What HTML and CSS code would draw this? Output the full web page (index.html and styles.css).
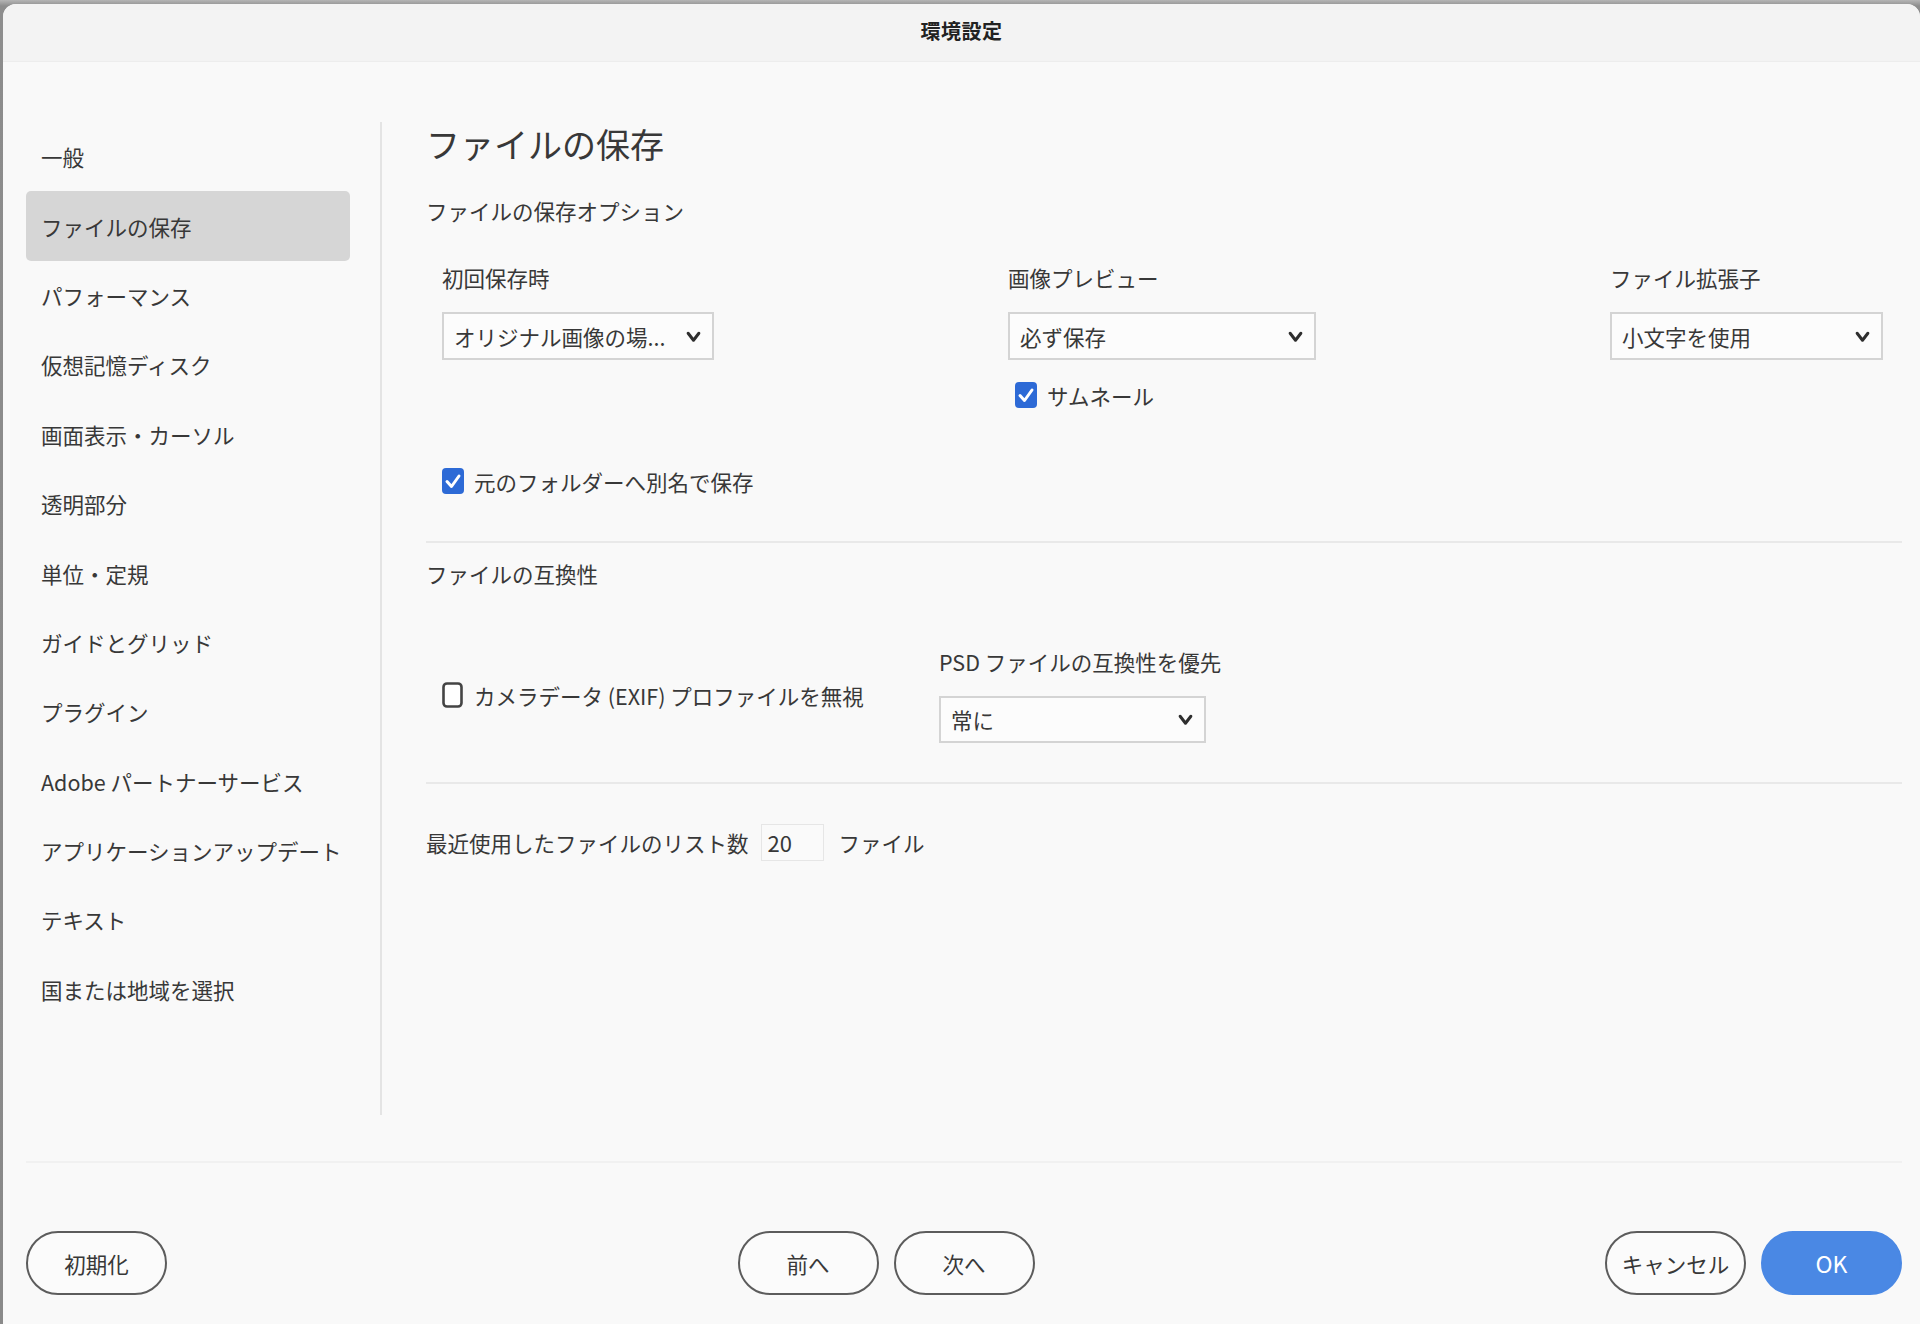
FILE: index.html
```html
<!DOCTYPE html>
<html lang="ja">
<head>
<meta charset="utf-8">
<title>環境設定</title>
<link rel="stylesheet" href="styles.css">
</head>
<body>
<div class="window">
  <header class="titlebar">環境設定</header>
  <div class="main">
    <nav class="sidebar">
      <div class="nav-item">一般</div>
      <div class="nav-item active">ファイルの保存</div>
      <div class="nav-item">パフォーマンス</div>
      <div class="nav-item">仮想記憶ディスク</div>
      <div class="nav-item">画面表示・カーソル</div>
      <div class="nav-item">透明部分</div>
      <div class="nav-item">単位・定規</div>
      <div class="nav-item">ガイドとグリッド</div>
      <div class="nav-item">プラグイン</div>
      <div class="nav-item">Adobe パートナーサービス</div>
      <div class="nav-item">アプリケーションアップデート</div>
      <div class="nav-item">テキスト</div>
      <div class="nav-item">国または地域を選択</div>
    </nav>
    <section class="content">
      <h1 class="page-title">ファイルの保存</h1>
      <h2 class="section-title first">ファイルの保存オプション</h2>
      <div class="options-grid">
        <div class="field col1">
          <div class="field-label">初回保存時</div>
          <div class="select w272"><span>オリジナル画像の場...</span><svg class="chev" viewBox="0 0 14 12"><path d="M2 3 L7 9.5 L12 3"/></svg></div>
        </div>
        <div class="field col2">
          <div class="field-label">画像プレビュー</div>
          <div class="select w308"><span>必ず保存</span><svg class="chev" viewBox="0 0 14 12"><path d="M2 3 L7 9.5 L12 3"/></svg></div>
          <label class="check sub">
            <svg class="box" viewBox="0 0 22 26"><rect x="0" y="0" width="22" height="26" rx="4" fill="#2d6ad6"/><path d="M5 13.5 L9.5 18.5 L17 8" fill="none" stroke="#fff" stroke-width="3" stroke-linecap="round" stroke-linejoin="round"/></svg>
            <span>サムネール</span>
          </label>
        </div>
        <div class="field col3">
          <div class="field-label">ファイル拡張子</div>
          <div class="select w273"><span>小文字を使用</span><svg class="chev" viewBox="0 0 14 12"><path d="M2 3 L7 9.5 L12 3"/></svg></div>
        </div>
      </div>
      <label class="check row-check">
        <svg class="box" viewBox="0 0 22 26"><rect x="0" y="0" width="22" height="26" rx="4" fill="#2d6ad6"/><path d="M5 13.5 L9.5 18.5 L17 8" fill="none" stroke="#fff" stroke-width="3" stroke-linecap="round" stroke-linejoin="round"/></svg>
        <span>元のフォルダーへ別名で保存</span>
      </label>
      <hr class="divider d1">
      <h2 class="section-title">ファイルの互換性</h2>
      <div class="compat-row">
        <label class="check exif">
          <svg class="box" viewBox="0 0 22 26"><rect x="1.5" y="1.5" width="18" height="23" rx="3.5" fill="#fff" stroke="#444" stroke-width="2.6"/></svg>
          <span>カメラデータ (EXIF) プロファイルを無視</span>
        </label>
        <div class="field">
          <div class="field-label">PSD ファイルの互換性を優先</div>
          <div class="select w267 h47"><span>常に</span><svg class="chev" viewBox="0 0 14 12"><path d="M2 3 L7 9.5 L12 3"/></svg></div>
        </div>
      </div>
      <hr class="divider d2">
      <div class="recent-row">
        <span>最近使用したファイルのリスト数</span>
        <span class="num-input">20</span>
        <span class="unit">ファイル</span>
      </div>
    </section>
  </div>
  <footer class="footer">
    <div class="btn-group">
      <button class="btn">初期化</button>
    </div>
    <div class="btn-group">
      <button class="btn">前へ</button>
      <button class="btn">次へ</button>
    </div>
    <div class="btn-group">
      <button class="btn">キャンセル</button>
      <button class="btn primary">OK</button>
    </div>
  </footer>
</div>
</body>
</html>
```
FILE: styles.css
```css
* { box-sizing: border-box; }

html, body {
  margin: 0;
  padding: 0;
}

body {
  width: 1920px;
  height: 1324px;
  overflow: hidden;
  background: linear-gradient(#b5b5b5, #8d8d8d 6px, #8a8a8a);
  font-family: "Noto Sans CJK JP", "Noto Sans", sans-serif;
  color: #383838;
  padding: 4px 0 0 3px;
}

.window {
  width: 1917px;
  height: 1324px;
  background: #f9f9f9;
  border-radius: 13px 13px 0 0;
  overflow: hidden;
  display: flex;
  flex-direction: column;
}

.titlebar {
  height: 58px;
  flex: none;
  background: #f3f3f3;
  border-bottom: 1px solid #ededed;
  text-align: center;
  font-size: 20px;
  font-weight: 700;
  line-height: 54px;
  color: #222;
  letter-spacing: 0.5px;
}

.main {
  flex: none;
  height: 1099px;
  display: flex;
  padding: 60px 0 46px 0;
}

.sidebar {
  width: 379px;
  flex: none;
  padding-left: 23px;
  border-right: 2px solid #e4e4e4;
  display: flex;
  flex-direction: column;
}

.nav-item {
  width: 324px;
  height: 69.4px;
  flex: none;
  display: flex;
  align-items: center;
  padding-left: 15px;
  font-size: 21.5px;
  color: #383838;
  border-radius: 5px;
  white-space: nowrap;
}

.nav-item.active {
  background: #d6d6d6;
}

.content {
  flex: 1;
  padding: 0 18px 0 44px;
}

.page-title {
  margin: 0;
  font-size: 34px;
  font-weight: 400;
  line-height: 44px;
  color: #383838;
}

.section-title {
  margin: 16px 0 0 0;
  font-size: 21.5px;
  font-weight: 400;
  line-height: 30px;
  color: #383838;
}

.section-title.first {
  margin-top: 30px;
}

.options-grid {
  margin-top: 37px;
  padding-left: 16px;
  display: grid;
  grid-template-columns: 566px 602px auto;
  align-items: start;
}

.field {
  display: flex;
  flex-direction: column;
}

.field-label {
  font-size: 21.5px;
  line-height: 30px;
  color: #383838;
  white-space: nowrap;
}

.select {
  margin-top: 19px;
  height: 48px;
  border: 2px solid #d4d4d4;
  background: #fcfcfc;
  display: flex;
  align-items: center;
  justify-content: space-between;
  padding: 0 11px 0 10px;
  font-size: 21.5px;
  color: #383838;
  white-space: nowrap;
}

.select.h47 { height: 47px; }
.w272 { width: 272px; }
.w308 { width: 308px; }
.w273 { width: 273px; }
.w267 { width: 267px; }

.chev {
  width: 15px;
  height: 13px;
  flex: none;
}

.chev path {
  fill: none;
  stroke: #2e2e2e;
  stroke-width: 2.8;
  stroke-linecap: round;
  stroke-linejoin: round;
}

.check {
  display: flex;
  align-items: center;
  gap: 10px;
  font-size: 21.5px;
  color: #383838;
  white-space: nowrap;
  height: 26px;
}

.check .box {
  width: 22px;
  height: 26px;
  flex: none;
}

.check.sub {
  margin-top: 22px;
  padding-left: 7px;
}

.row-check {
  margin-top: 60px;
  padding-left: 16px;
}

.divider {
  border: 0;
  height: 2px;
  background: #e9e9e9;
  margin: 0;
}

.divider.d1 { margin-top: 47px; }
.divider.d2 { margin-top: 39px; }

.compat-row {
  margin-top: 58px;
  padding-left: 16px;
  display: flex;
  align-items: center;
}

.check.exif {
  width: 497px;
}

.recent-row {
  margin-top: 40px;
  display: flex;
  align-items: center;
  font-size: 21.5px;
  color: #383838;
  white-space: nowrap;
}

.num-input {
  margin-left: 12px;
  width: 63px;
  height: 37px;
  border: 1px solid #e6e6e6;
  background: #fafafa;
  padding-left: 6px;
  line-height: 35px;
  font-size: 22px;
}

.unit {
  margin-left: 15px;
}

.footer {
  flex: none;
  margin: 0 18px 0 23px;
  border-top: 2px solid #f1f1f1;
  padding-top: 68px;
  display: flex;
  justify-content: space-between;
}

.btn-group {
  display: flex;
  gap: 15px;
}

.btn {
  width: 141px;
  height: 64px;
  border: 2px solid #5c5c5c;
  border-radius: 32px;
  background: #fbfbfb;
  font-family: "Noto Sans CJK JP", "Noto Sans", sans-serif;
  font-size: 21.5px;
  color: #383838;
  padding: 0;
}

.btn.primary {
  background: #4a88e4;
  border-color: #4a88e4;
  color: #fff;
  font-size: 23px;
}
```
